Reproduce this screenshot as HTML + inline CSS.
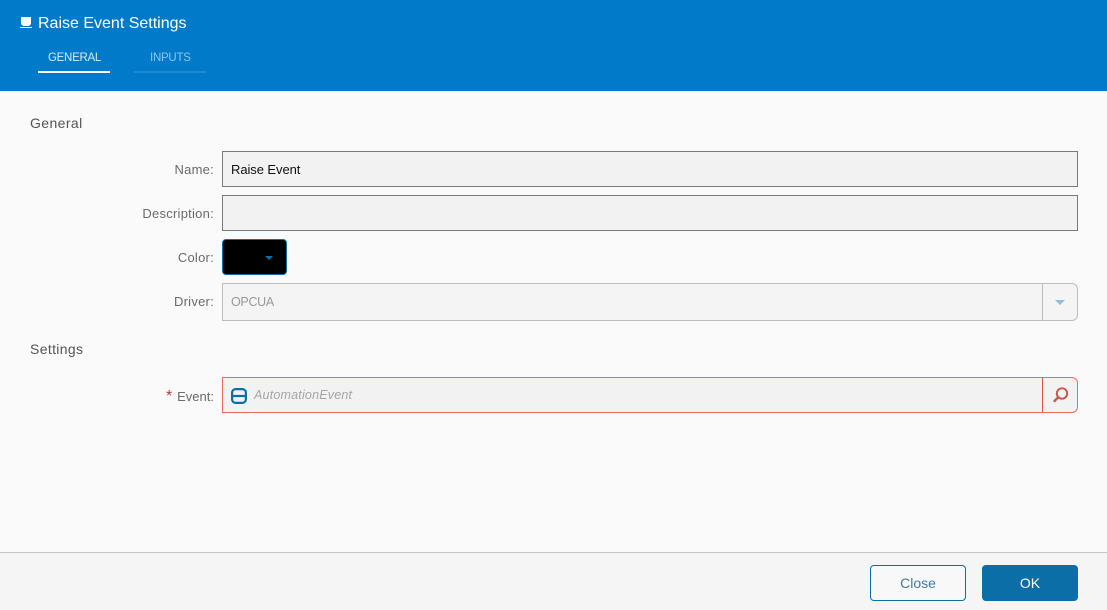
<!DOCTYPE html>
<html><head><meta charset="utf-8"><style>
html,body{margin:0;padding:0}
body{width:1107px;height:610px;position:relative;overflow:hidden;background:#fafafa;font-family:"Liberation Sans",sans-serif}
.a{position:absolute;box-sizing:border-box}
.t{position:absolute;white-space:nowrap}
.l{position:absolute;white-space:nowrap;right:893px;font-size:13px;color:#6b6b6b;letter-spacing:.25px;line-height:18px}
</style></head><body>
<div class="a" style="left:0;top:0;width:1107px;height:91px;background:#007ac9"></div>
<svg class="a" style="left:20px;top:16px" width="13" height="13" viewBox="0 0 13 13"><path d="M1 1H11V8L9 10H3L1 8Z" fill="#fff"/><path d="M0 11H12V12H0Z" fill="#fff"/></svg>
<div class="t" style="left:38px;top:13px;font-size:16px;line-height:21px;color:#fff;letter-spacing:0">Raise Event Settings</div>
<div class="t" style="left:48px;top:50px;font-size:11.500px;line-height:17px;color:#d5ecf8;letter-spacing:-.28px">GENERAL</div>
<div class="t" style="left:150px;top:50px;font-size:11.500px;line-height:17px;color:#8cc6ea;letter-spacing:-.25px">INPUTS</div>
<div class="a" style="left:38px;top:71px;width:72px;height:2px;background:#fff"></div>
<div class="a" style="left:134px;top:71px;width:72px;height:2px;background:#2089d0"></div>

<div class="t" style="left:30px;top:114px;font-size:14px;line-height:18px;color:#555;letter-spacing:.4px">General</div>
<div class="l" style="top:161px">Name:</div>
<div class="a" style="left:222px;top:151px;width:856px;height:36px;background:#f2f2f2;border:1px solid #7a7a7a"></div>
<div class="t" style="left:231px;top:161px;font-size:13px;line-height:18px;color:#111;letter-spacing:-.07px">Raise Event</div>
<div class="l" style="top:205px">Description:</div>
<div class="a" style="left:222px;top:195px;width:856px;height:36px;background:#f2f2f2;border:1px solid #7a7a7a"></div>
<div class="l" style="top:249px">Color:</div>
<div class="a" style="left:222px;top:239px;width:65px;height:36px;background:#000;border:1px solid #0a6ea8;border-radius:4px"></div>
<div class="a" style="left:265px;top:256px;width:0;height:0;border-left:4.500px solid transparent;border-right:4.500px solid transparent;border-top:4.500px solid #0a6ea8"></div>
<div class="l" style="top:293px">Driver:</div>
<div class="a" style="left:222px;top:283px;width:856px;height:38px;background:#f4f4f4;border:1px solid #bdbdbd;border-radius:0 6px 6px 0"></div>
<div class="a" style="left:1042px;top:284px;width:1px;height:36px;background:#bdbdbd"></div>
<div class="t" style="left:231px;top:293px;font-size:12.500px;line-height:18px;color:#999;letter-spacing:-.3px">OPCUA</div>
<div class="a" style="left:1055px;top:300px;width:0;height:0;border-left:5px solid transparent;border-right:5px solid transparent;border-top:5px solid #8fbfdc"></div>

<div class="t" style="left:30px;top:340px;font-size:14px;line-height:18px;color:#555;letter-spacing:.35px">Settings</div>
<div class="t" style="left:166px;top:388px;font-size:16px;line-height:18px;color:#b03a3a">*</div>
<div class="l" style="top:388px;letter-spacing:0">Event:</div>
<div class="a" style="left:222px;top:377px;width:856px;height:36px;background:#f2f2f2;border:1px solid #ea6a60;border-radius:0 6px 6px 0"></div>
<div class="a" style="left:1042px;top:378px;width:1px;height:34px;background:#d9534a"></div>
<svg class="a" style="left:231px;top:388px" width="17" height="17" viewBox="0 0 17 17"><rect x="1.100" y="1.100" width="13.800" height="13.800" rx="3.500" fill="none" stroke="#0a6ea8" stroke-width="2.200"/><path d="M1 8H15" stroke="#0a6ea8" stroke-width="2.200"/></svg>
<div class="t" style="left:254px;top:387px;font-size:12.500px;line-height:17px;color:#a5a5a5;font-style:italic;letter-spacing:.2px">AutomationEvent</div>
<svg class="a" style="left:1051px;top:385px" width="20" height="20" viewBox="0 0 20 20"><circle cx="11" cy="8.500" r="5.200" fill="none" stroke="#c0584c" stroke-width="1.900"/><path d="M7.200 12.300L3.500 16" stroke="#c0584c" stroke-width="2.400" stroke-linecap="round"/></svg>

<div class="a" style="left:0;top:552px;width:1107px;height:58px;background:#f5f5f5;border-top:1px solid #c4c4c4"></div>
<div class="a" style="left:870px;top:565px;width:96px;height:36px;border:1px solid #0d6ea6;border-radius:4px;background:#f8f8f8"></div>
<div class="t" style="left:870px;width:96px;top:574px;text-align:center;font-size:14px;line-height:18px;color:#3d7ca8;letter-spacing:0">Close</div>
<div class="a" style="left:982px;top:565px;width:96px;height:36px;border-radius:4px;background:#0b6ea6"></div>
<div class="t" style="left:982px;width:96px;top:574px;text-align:center;font-size:14px;line-height:18px;color:#fff;letter-spacing:0">OK</div>
</body></html>
